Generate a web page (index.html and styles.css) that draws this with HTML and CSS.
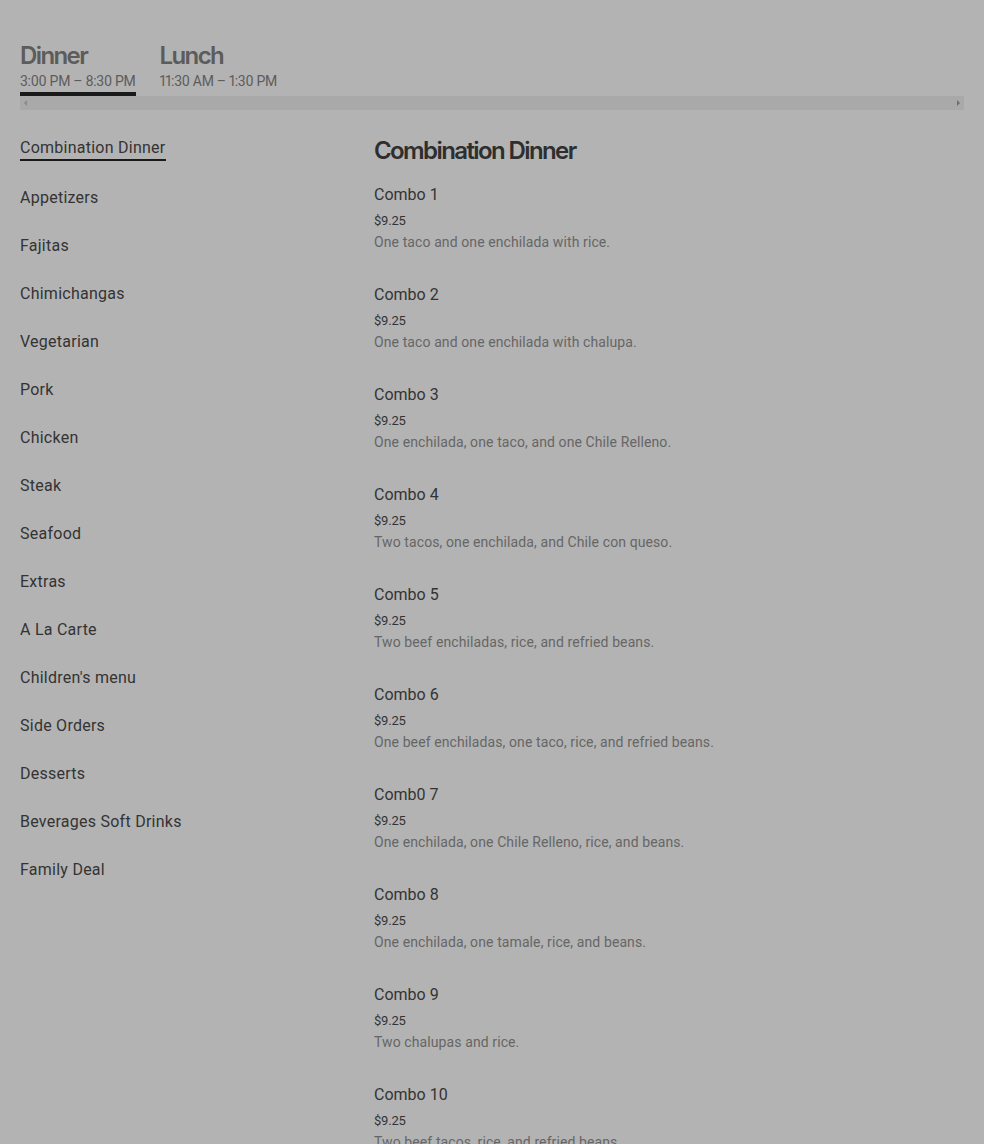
FILE: index.html
```html
<html>
<head>
<title>Menu</title>
<link rel="stylesheet" href="styles.css">
</head>
<body>
<div class="page">
  <div class="tabs">
    <div class="tab active">
      <div class="tab-name">Dinner</div>
      <div class="tab-time">3:00 PM – 8:30 PM</div>
    </div>
    <div class="tab">
      <div class="tab-name">Lunch</div>
      <div class="tab-time">11:30 AM – 1:30 PM</div>
    </div>
  </div>
  <div class="scrollbar">
    <span class="arrow left"></span>
    <span class="arrow right"></span>
  </div>
  <div class="main">
    <ul class="nav">
      <li class="current">Combination Dinner</li>
      <li>Appetizers</li>
      <li>Fajitas</li>
      <li>Chimichangas</li>
      <li>Vegetarian</li>
      <li>Pork</li>
      <li>Chicken</li>
      <li>Steak</li>
      <li>Seafood</li>
      <li>Extras</li>
      <li>A La Carte</li>
      <li>Children's menu</li>
      <li>Side Orders</li>
      <li>Desserts</li>
      <li>Beverages Soft Drinks</li>
      <li>Family Deal</li>
    </ul>
    <div class="menu">
      <h2>Combination Dinner</h2>
      <div class="item">
        <div class="item-name">Combo 1</div>
        <div class="item-price">$9.25</div>
        <div class="item-desc">One taco and one enchilada with rice.</div>
      </div>
      <div class="item">
        <div class="item-name">Combo 2</div>
        <div class="item-price">$9.25</div>
        <div class="item-desc">One taco and one enchilada with chalupa.</div>
      </div>
      <div class="item">
        <div class="item-name">Combo 3</div>
        <div class="item-price">$9.25</div>
        <div class="item-desc">One enchilada, one taco, and one Chile Relleno.</div>
      </div>
      <div class="item">
        <div class="item-name">Combo 4</div>
        <div class="item-price">$9.25</div>
        <div class="item-desc">Two tacos, one enchilada, and Chile con queso.</div>
      </div>
      <div class="item">
        <div class="item-name">Combo 5</div>
        <div class="item-price">$9.25</div>
        <div class="item-desc">Two beef enchiladas, rice, and refried beans.</div>
      </div>
      <div class="item">
        <div class="item-name">Combo 6</div>
        <div class="item-price">$9.25</div>
        <div class="item-desc">One beef enchiladas, one taco, rice, and refried beans.</div>
      </div>
      <div class="item">
        <div class="item-name">Comb0 7</div>
        <div class="item-price">$9.25</div>
        <div class="item-desc">One enchilada, one Chile Relleno, rice, and beans.</div>
      </div>
      <div class="item">
        <div class="item-name">Combo 8</div>
        <div class="item-price">$9.25</div>
        <div class="item-desc">One enchilada, one tamale, rice, and beans.</div>
      </div>
      <div class="item">
        <div class="item-name">Combo 9</div>
        <div class="item-price">$9.25</div>
        <div class="item-desc">Two chalupas and rice.</div>
      </div>
      <div class="item">
        <div class="item-name">Combo 10</div>
        <div class="item-price">$9.25</div>
        <div class="item-desc">Two beef tacos, rice, and refried beans.</div>
      </div>
    </div>
  </div>
</div>
</body>
</html>
```
FILE: styles.css
```css
html, body { margin:0; padding:0; background:#b3b3b3; }
body { color:#2e2e2e; font-family:Roboto, "Liberation Sans", Arial, sans-serif; }
.page { padding:40px 20px 0 20px; height:1104px; overflow:hidden; }

.tabs { display:flex; gap:24px; }
.tab { padding-bottom:2px; border-bottom:4px solid transparent; }
.tab.active { border-bottom-color:#1a1a1a; }
.tab-name { font-family:Inter, "Noto Sans", sans-serif; font-size:24px; font-weight:600; letter-spacing:-1.6px; line-height:32px; color:#5c5c5c; }
.tab-time { font-size:14px; line-height:18px; color:#5c5c5c; letter-spacing:-0.28px; font-variant-numeric:proportional-nums; }

.scrollbar { height:14px; background:#a9a9a9; display:flex; justify-content:space-between; align-items:center; padding:0 4px; }
.arrow { width:0; height:0; border-top:3px solid transparent; border-bottom:3px solid transparent; }
.arrow.left { border-right:3px solid #8a8a8a; }
.arrow.right { border-left:3px solid #6e6e6e; }

.main { display:flex; padding-top:27px; }
.nav { list-style:none; margin:0; padding:0; width:354px; flex:none; }
.nav li { font-size:16px; line-height:22px; height:22px; margin-bottom:26px; color:#333; letter-spacing:0.25px; }
.nav li.current { display:inline-block; border-bottom:2px solid #1a1a1a; margin-bottom:26px; }

.menu { flex:1; margin-top:-1px; }
.menu h2 { margin:0 0 18px 0; font-family:Inter, "Noto Sans", sans-serif; font-size:24px; font-weight:600; letter-spacing:-1.6px; line-height:30px; color:#2e2e2e; }
.item { height:100px; }
.item-name { font-size:16px; line-height:22px; color:#333; }
.item-price { font-size:13px; line-height:18px; margin-top:6px; color:#333; letter-spacing:-0.2px; }
.item-desc { font-size:14px; line-height:20px; margin-top:2px; color:#666; letter-spacing:0.1px; }
```
